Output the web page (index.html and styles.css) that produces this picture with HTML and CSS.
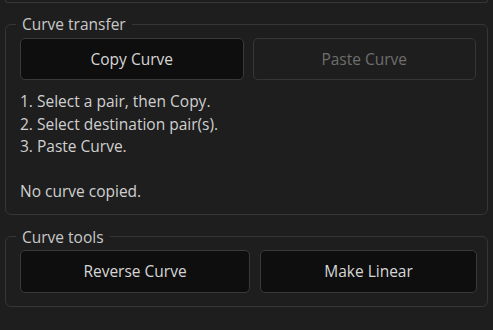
FILE: index.html
```html
<!DOCTYPE html>
<html>
<head>
<meta charset="utf-8">
<link rel="stylesheet" href="styles.css">
</head>
<body>
<div class="panel">
  <div class="prev-section"></div>
  <fieldset class="group group-transfer">
    <legend>Curve transfer</legend>
    <div class="group-body">
      <div class="btn-row">
        <button class="btn btn-copy">Copy Curve</button>
        <button class="btn btn-disabled">Paste Curve</button>
      </div>
      <div class="help">
        <div>1. Select a pair, then Copy.</div>
        <div>2. Select destination pair(s).</div>
        <div>3. Paste Curve.</div>
        <div class="blank">&nbsp;</div>
        <div>No curve copied.</div>
      </div>
    </div>
  </fieldset>
  <fieldset class="group group-tools">
    <legend>Curve tools</legend>
    <div class="group-body">
      <div class="btn-row tools-row">
        <button class="btn btn-reverse">Reverse Curve</button>
        <button class="btn btn-linear">Make Linear</button>
      </div>
    </div>
  </fieldset>
</div>
</body>
</html>
```

FILE: styles.css
```css
html, body {
  margin: 0;
  padding: 0;
  background: #1e1e1e;
  width: 493px;
  height: 330px;
  overflow: hidden;
  font-family: "Open Sans", "Noto Sans", sans-serif;
  color: #cfcfcf;
}

.panel {
  display: flex;
  flex-direction: column;
  padding: 0 5px;
  box-sizing: border-box;
  width: 493px;
}

.prev-section {
  height: 2px;
  border: 1px solid #363636;
  border-top: none;
  border-radius: 0 0 6px 6px;
}

.group {
  margin: 0;
  border: 1px solid #363636;
  border-radius: 6px;
  padding: 0;
  min-width: 0;
}

.group-body {
  padding: 0 11px 0 14px;
}

.group-transfer {
  margin-top: 11px;
  padding-bottom: 11px;
}

.group-tools {
  margin-top: 12px;
  padding-bottom: 13px;
}

legend {
  font-size: 15.5px;
  color: #c9c9c9;
  padding: 0 6px;
  margin-left: 10px;
  line-height: 20px;
}

.btn-row {
  display: flex;
  gap: 9px;
  margin-top: 4px;
}

.btn {
  font-family: inherit;
  font-size: 15.5px;
  height: 42px;
  border-radius: 5px;
  border: 1px solid #3a3a3a;
  background: #0e0e0e;
  color: #d6d6d6;
  padding: 0;
  flex: 1 1 0;
}

.btn-disabled {
  background: #1e1e1e;
  color: #6e6e6e;
  border-color: #363636;
}

.tools-row {
  gap: 10px;
  margin-top: 3px;
}

.tools-row .btn {
  height: 43px;
}

.btn-reverse {
  flex: 0 0 230px;
}

.btn-linear {
  flex: 1 1 0;
  margin-right: -1px;
}

.help {
  margin-top: 10px;
  font-size: 15.5px;
  line-height: 22.6px;
  color: #d0d0d0;
}
```
